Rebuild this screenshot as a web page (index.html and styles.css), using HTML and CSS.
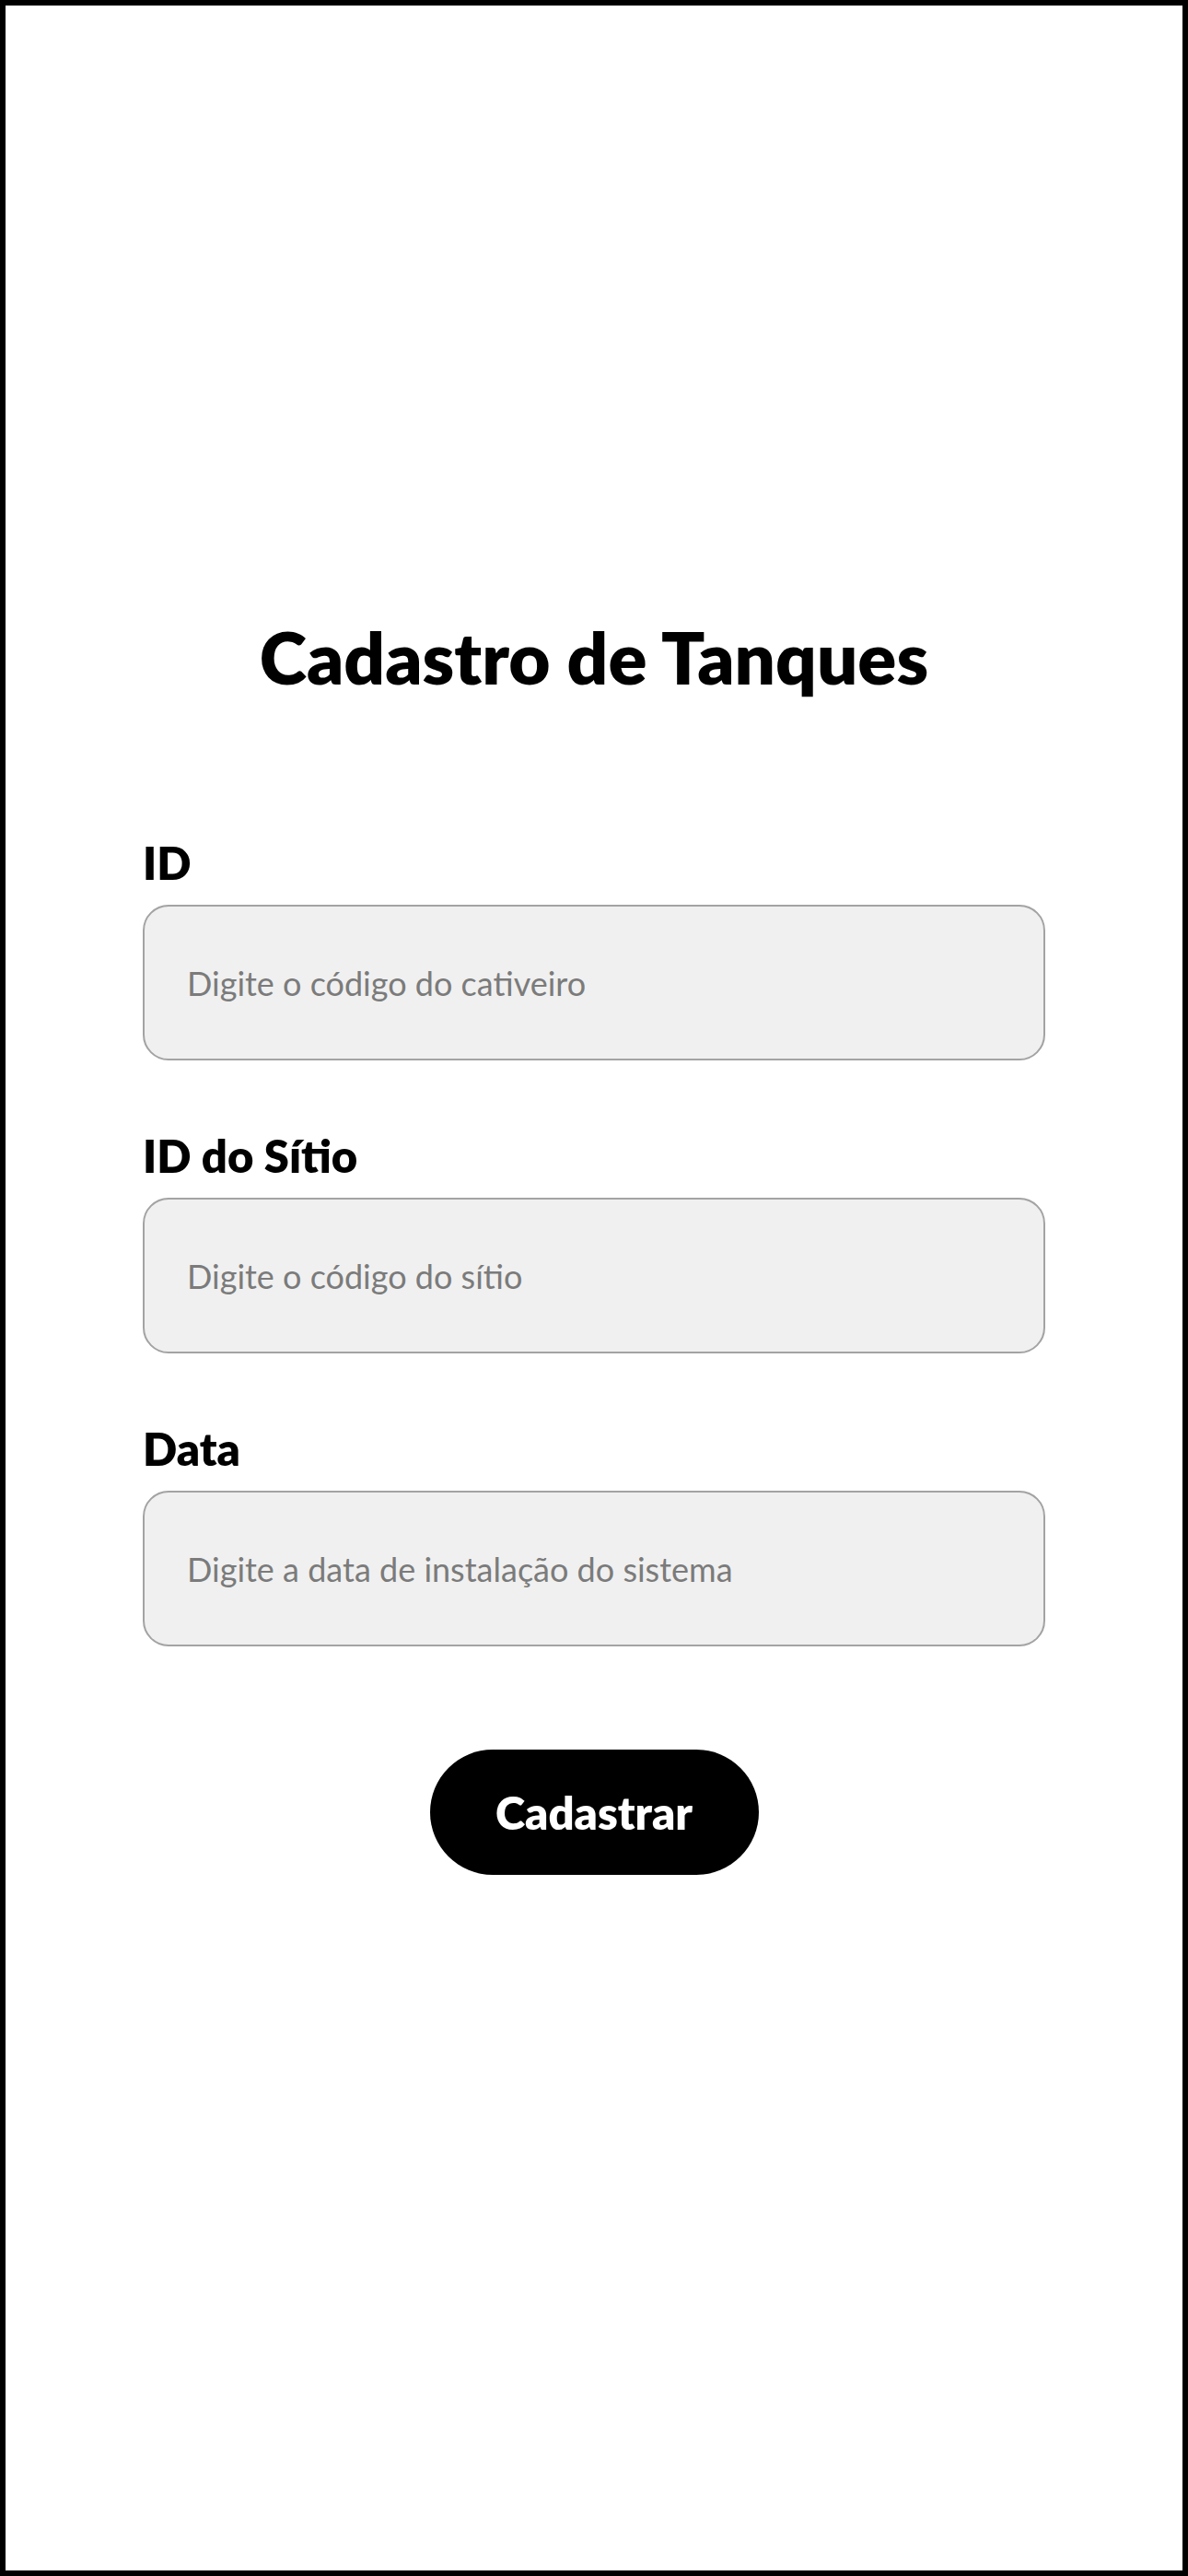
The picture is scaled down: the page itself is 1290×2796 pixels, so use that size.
FILE: index.html
```html
<!DOCTYPE html>
<html lang="pt-BR">
<head>
<meta charset="utf-8">
<title>Cadastro de Tanques</title>
<link rel="stylesheet" href="styles.css">
</head>
<body>
<main class="screen">
  <h1 class="title">Cadastro de Tanques</h1>
  <form class="form">
    <div class="field">
      <label class="label" for="id">ID</label>
      <input class="input" id="id" type="text" placeholder="Digite o código do cativeiro">
    </div>
    <div class="field">
      <label class="label" for="sitio">ID do Sítio</label>
      <input class="input" id="sitio" type="text" placeholder="Digite o código do sítio">
    </div>
    <div class="field">
      <label class="label" for="data">Data</label>
      <input class="input" id="data" type="text" placeholder="Digite a data de instalação do sistema">
    </div>
    <div class="actions">
      <button class="button" type="button">Cadastrar</button>
    </div>
  </form>
</main>
</body>
</html>
```
FILE: styles.css
```css
* { box-sizing: border-box; }
html, body { margin: 0; padding: 0; background: #fff; }
body { font-family: Lato, "Open Sans", sans-serif; color: #000; }

.screen {
  width: 1290px;
  height: 2796px;
  border: 6px solid #000;
  background: #fff;
  padding-top: 669px;
  display: flex;
  flex-direction: column;
  align-items: center;
}

.title {
  margin: 0;
  font-size: 78px;
  line-height: 76px;
  font-weight: 800;
  text-align: center;
}

.form {
  width: 980px;
  margin-top: 164px;
  display: flex;
  flex-direction: column;
  gap: 82px;
}

.field {
  display: flex;
  flex-direction: column;
  gap: 24px;
}

.label {
  font-size: 49px;
  line-height: 43px;
  font-weight: 800;
}

.input {
  width: 100%;
  height: 169px;
  border: 2.5px solid #a3a3a3;
  border-radius: 28px;
  background: #f0f0f0;
  padding: 0 44px 0 46px;
  font-family: Lato, "Open Sans", sans-serif;
  font-size: 36px;
  color: #333;
  outline: none;
}
.input::placeholder { color: #7b7b7b; opacity: 1; }

.actions {
  display: flex;
  justify-content: center;
  margin-top: 30px;
}

.button {
  width: 357px;
  height: 136px;
  border: none;
  border-radius: 68px;
  background: #000;
  color: #fff;
  font-family: Lato, "Open Sans", sans-serif;
  font-size: 49px;
  font-weight: 800;
  cursor: pointer;
}
```
